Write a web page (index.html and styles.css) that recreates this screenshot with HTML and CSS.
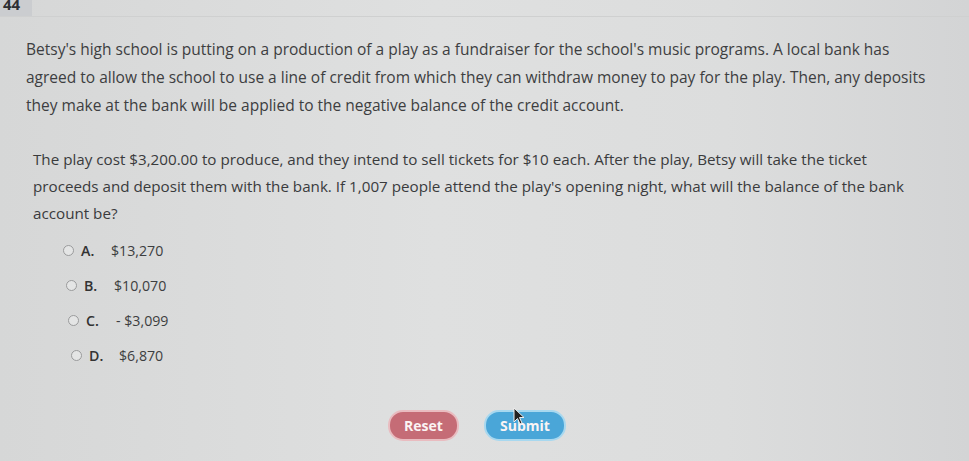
FILE: index.html
```html
<!DOCTYPE html>
<html>
<head>
<meta charset="utf-8">
<link rel="stylesheet" href="styles.css">
</head>
<body>
<div class="page">
  <div class="topbar"><span class="qnum">44</span></div>
  <div class="content">
    <p class="intro">Betsy's high school is putting on a production of a play as a fundraiser for the school's music programs. A local bank has agreed to allow the school to use a line of credit from which they can withdraw money to pay for the play. Then, any deposits they make at the bank will be applied to the negative balance of the credit account.</p>
    <p class="question">The play cost $3,200.00 to produce, and they intend to sell tickets for $10 each. After the play, Betsy will take the ticket proceeds and deposit them with the bank. If 1,007 people attend the play's opening night, what will the balance of the bank account be?</p>
    <ul class="options">
      <li class="opt opt-a"><span class="radio"></span><span class="letter">A.</span><span class="val">$13,270</span></li>
      <li class="opt opt-b"><span class="radio"></span><span class="letter">B.</span><span class="val">$10,070</span></li>
      <li class="opt opt-c"><span class="radio"></span><span class="letter">C.</span><span class="val">- $3,099</span></li>
      <li class="opt opt-d"><span class="radio"></span><span class="letter">D.</span><span class="val">$6,870</span></li>
    </ul>
    <div class="actions">
      <button class="btn btn-reset">Reset</button>
      <button class="btn btn-submit">Submit
        <svg class="cursor" width="12" height="18" viewBox="0 0 12 18"><path d="M1 1 L1 15 L4.5 11.5 L7 17 L9 16 L6.5 10.5 L11 10.5 Z" fill="#222" stroke="#eee" stroke-width="1"/></svg>
      </button>
    </div>
  </div>
</div>
</body>
</html>
```
FILE: styles.css
```css
html, body {
  margin: 0;
  padding: 0;
}
body {
  width: 969px;
  height: 461px;
  overflow: hidden;
  background: linear-gradient(90deg, #d6d7d7 0%, #dfe0e0 45%, #dcdddd 75%, #d3d4d5 100%);
  font-family: "Open Sans", "DejaVu Sans", sans-serif;
  color: #3a3b3d;
}
.page {
  display: flex;
  flex-direction: column;
  height: 461px;
}
.topbar {
  height: 16px;
  border-bottom: 1px solid #cfd0d0;
  display: flex;
  align-items: flex-end;
}
.qnum {
  width: 32px;
  height: 16px;
  background: #cbcdd0;
  font-size: 15px;
  font-weight: 700;
  line-height: 8px;
  color: #2e2f33;
  padding-left: 3px;
  box-sizing: border-box;
  overflow: hidden;
  display: flex;
  align-items: flex-start;
}
.content {
  padding: 18px 0 0 26px;
  display: flex;
  flex-direction: column;
}
.intro {
  margin: 0;
  width: 910px;
  font-size: 15.5px;
  line-height: 28px;
  color: #3d3e41;
}
.question {
  margin: 27px 0 0 7px;
  width: 880px;
  font-size: 15.2px;
  line-height: 27px;
}
.options {
  list-style: none;
  margin: 13px 0 0 0;
  padding: 0;
  display: flex;
  flex-direction: column;
  gap: 14px;
  font-size: 14.2px;
}
.opt {
  display: flex;
  align-items: center;
  height: 21px;
}
.opt-a { padding-left: 37px; }
.opt-b { padding-left: 40px; }
.opt-c { padding-left: 42px; }
.opt-d { padding-left: 45px; }
.radio {
  width: 9px;
  height: 9px;
  border: 1px solid #9a9b9c;
  border-radius: 50%;
  background: #e4e5e5;
  margin-right: 7px;
}
.letter {
  width: 30px;
  font-weight: 600;
  color: #333;
}
.val {
  color: #3d3e40;
}
.actions {
  margin-top: 44px;
  display: flex;
  gap: 25px;
  padding-left: 362px;
}
.btn {
  position: relative;
  height: 31px;
  border-radius: 15px;
  font-family: "Open Sans", "DejaVu Sans", sans-serif;
  font-size: 14px;
  font-weight: 700;
  color: #fbf4f4;
  padding: 0;
}
.btn-reset {
  width: 71px;
  background: #c56c76;
  border: 2px solid #e9bcc0;
}
.btn-submit {
  width: 82px;
  background: #4aa6d8;
  border: 2px solid #a8d8ef;
}
.cursor {
  position: absolute;
  left: 27px;
  top: -5px;
}
```
